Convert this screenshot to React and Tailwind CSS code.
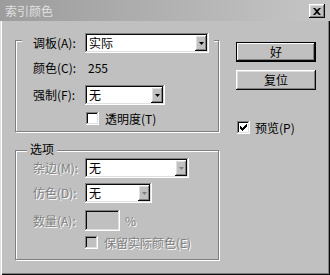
import React from "react";

const raised =
  "shadow-[inset_-1px_-1px_#0a0a0a,inset_1px_1px_#fff,inset_-2px_-2px_#808080,inset_2px_2px_#dfdfdf]";
const sunken =
  "shadow-[inset_-1px_-1px_#fff,inset_1px_1px_#808080,inset_-2px_-2px_#dfdfdf,inset_2px_2px_#0a0a0a]";
const etched =
  "border border-[#808080] shadow-[1px_1px_0_#fff,inset_1px_1px_0_#fff]";
const dim = "text-[#808080] [text-shadow:1px_1px_0_#fff]";

const Arrow = ({ disabled }) => (
  <div className={`w-[12px] h-full flex items-center justify-center bg-[#c0c0c0] ${raised}`}>
    <svg width="5" height="3" viewBox="0 0 5 3">
      <path d="M0 0h5L2.5 3z" fill={disabled ? "#808080" : "#000"} />
    </svg>
  </div>
);

const Select = ({ value, width, disabled }) => (
  <div className={`${width} h-[20px] bg-white p-[2px] flex ${sunken}`}>
    <span className="flex-1 pl-[2px] leading-[16px] text-black">{value}</span>
    <Arrow disabled={disabled} />
  </div>
);

const Check = ({ checked, disabled }) => (
  <div
    className={`w-[13px] h-[13px] flex items-center justify-center ${
      disabled ? "bg-[#c0c0c0]" : "bg-white"
    } ${sunken}`}
  >
    {checked && (
      <svg width="7" height="7" viewBox="0 0 7 7" shapeRendering="crispEdges">
        <path
          d="M6 0h1v3h-1zM5 1h1v3h-1zM4 2h1v3h-1zM3 3h1v3h-1zM2 4h1v3h-1zM1 3h1v3h-1zM0 2h1v3h-1z"
          fill="#000"
        />
      </svg>
    )}
  </div>
);

export default function App() {
  return (
    <div
      className="w-[330px] h-[275px] bg-[#c0c0c0] flex flex-col overflow-hidden text-[12px] leading-[16px] text-black shadow-[inset_1px_0_#dfdfdf,inset_2px_0_#fff,inset_-1px_-1px_#0a0a0a,inset_-2px_-2px_#808080]"
      style={{ fontFamily: '"Noto Sans CJK SC", sans-serif' }}
    >
      {/* title bar */}
      <div className="h-[21px] flex bg-gradient-to-r from-[#9c9c9c] to-[#c6c6c6]">
        <span className="ml-[5px] mt-[3px] flex-1 text-[#e0e0e0]">索引颜色</span>
        <div
          className={`w-[16px] h-[14px] mt-[4px] mr-[5px] bg-[#c0c0c0] flex items-center justify-center ${raised}`}
        >
          <svg width="8" height="7" viewBox="0 0 8 7">
            <path d="M0 0h2l2 2 2-2h2L5 3.5 8 7H6L4 5 2 7H0l3-3.5z" fill="#000" />
          </svg>
        </div>
      </div>

      <div className="flex flex-1">
        {/* left column */}
        <div className="ml-[15px] w-[204px] flex flex-col">
          <div className={`mt-[19px] h-[92px] flex flex-col ${etched}`}>
            <div className="-mt-[8px] ml-[6px] w-[192px] h-[20px] bg-[#c0c0c0] flex items-center">
              <span className="pl-[11px] w-[63px]">调板(A):</span>
              <Select value="实际" width="w-[124px]" />
            </div>
            <div className="mt-[7px] ml-[17px] flex h-[16px]">
              <span className="w-[55px]">颜色(C):</span>
              <span>255</span>
            </div>
            <div className="mt-[9px] ml-[17px] flex items-center h-[20px]">
              <span className="w-[52px]">强制(F):</span>
              <Select value="无" width="w-[80px]" />
            </div>
            <div className="mt-[7px] ml-[70px] flex items-center h-[13px] gap-[6px]">
              <Check />
              <span>透明度(T)</span>
            </div>
          </div>

          <div className={`mt-[18px] h-[110px] flex flex-col ${etched}`}>
            <span className="-mt-[10px] ml-[11px] px-[3px] w-fit bg-[#c0c0c0]">选项</span>
            <div className="mt-[1px] ml-[17px] flex items-center h-[20px]">
              <span className={`w-[52px] ${dim}`}>杂边(M):</span>
              <Select value="无" width="w-[104px]" disabled />
            </div>
            <div className="mt-[5px] ml-[17px] flex items-center h-[20px]">
              <span className={`w-[52px] ${dim}`}>仿色(D):</span>
              <Select value="无" width="w-[67px]" disabled />
            </div>
            <div className="mt-[7px] ml-[17px] flex items-center h-[21px]">
              <span className={`w-[52px] ${dim}`}>数量(A):</span>
              <div className={`w-[35px] h-[21px] bg-[#c0c0c0] ${sunken}`} />
              <span className={`ml-[5px] ${dim}`}>%</span>
            </div>
            <div className="mt-[5px] ml-[69px] flex items-center h-[13px] gap-[6px]">
              <Check disabled />
              <span className={dim}>保留实际颜色(E)</span>
            </div>
          </div>
        </div>

        {/* right column */}
        <div className="ml-[17px] w-[80px] flex flex-col">
          <button className="mt-[21px] h-[20px] bg-[#c0c0c0] border border-black shadow-[inset_-1px_-1px_#0a0a0a,inset_1px_1px_#fff,inset_-2px_-2px_#808080]">
            好
          </button>
          <button className={`mt-[8px] h-[20px] bg-[#c0c0c0] ${raised}`}>复位</button>
          <div className="mt-[31px] ml-[1px] flex items-center h-[13px] gap-[5px]">
            <Check checked />
            <span>预览(P)</span>
          </div>
        </div>
      </div>
    </div>
  );
}
